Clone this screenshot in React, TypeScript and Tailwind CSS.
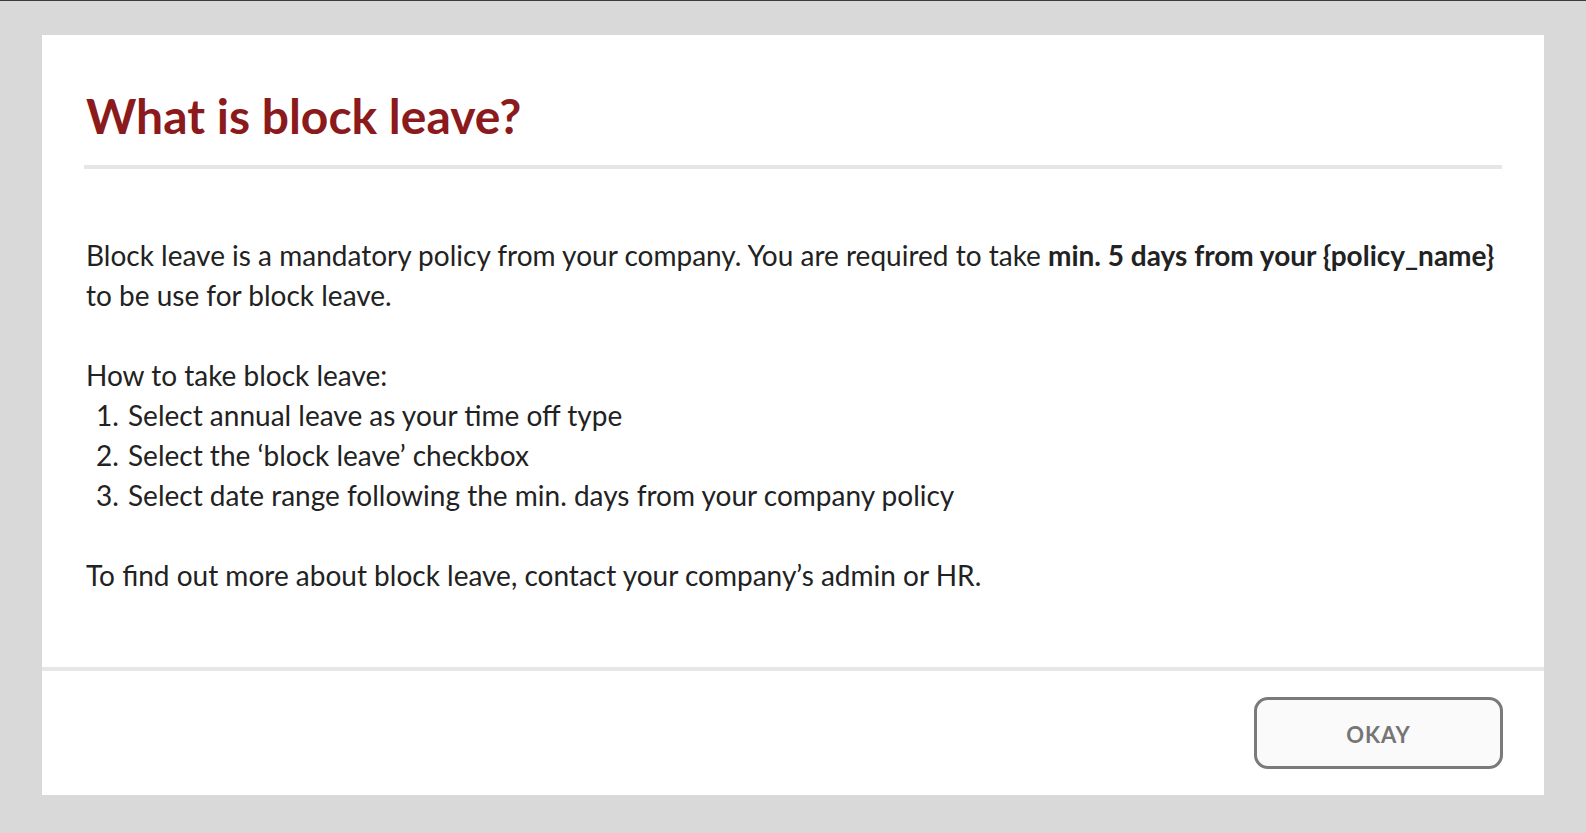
import React from "react";

export default function App() {
  const steps = [
    "Select annual leave as your time off type",
    "Select the \u2018block leave\u2019 checkbox",
    "Select date range following the min. days from your company policy",
  ];
  return (
    <div
      className="w-full h-[833px] bg-[#d9d9d9] flex flex-col overflow-hidden"
      style={{ fontFamily: "Lato, 'Open Sans', sans-serif" }}
    >
      <div className="h-px bg-[#3c3c3c] shrink-0" />
      <div className="mx-[42px] mt-[34px] h-[760px] bg-white flex flex-col">
        <div className="px-[42px] pt-[52px]">
          <h1 className="pl-[2px] text-[48px] leading-[1.2] font-bold text-[#8a1a1c]">
            What is block leave?
          </h1>
          <div className="mt-[20px] h-[4px] bg-[#e6e6e6]" />
          <div className="mt-[66px] pl-[2px] text-[28px] leading-[40px] text-[#222222]">
            <p>
              Block leave is a mandatory policy from your company. You are required to take{" "}
              <span className="font-bold">min. 5 days from your {"{policy_name}"}</span> to be use for block leave.
            </p>
            <p className="mt-[40px]">How to take block leave:</p>
            <ol>
              {steps.map((s, i) => (
                <li key={i} className="flex">
                  <span className="w-[42px] shrink-0 pl-[10px]">{i + 1}.</span>
                  <span>{s}</span>
                </li>
              ))}
            </ol>
            <p className="mt-[40px]">
              To find out more about block leave, contact your company&rsquo;s admin or HR.
            </p>
          </div>
        </div>
        <div className="flex-1" />
        <div className="border-t-[4px] border-[#e6e6e6] px-[41px] py-[26px] flex justify-end">
          <button className="w-[249px] h-[72px] rounded-[14px] border-[3px] border-[#7a7a7a] bg-[#fafafa] pt-[3px] text-[22px] font-bold tracking-[1px] text-[#757575] flex items-center justify-center">
            OKAY
          </button>
        </div>
      </div>
    </div>
  );
}
